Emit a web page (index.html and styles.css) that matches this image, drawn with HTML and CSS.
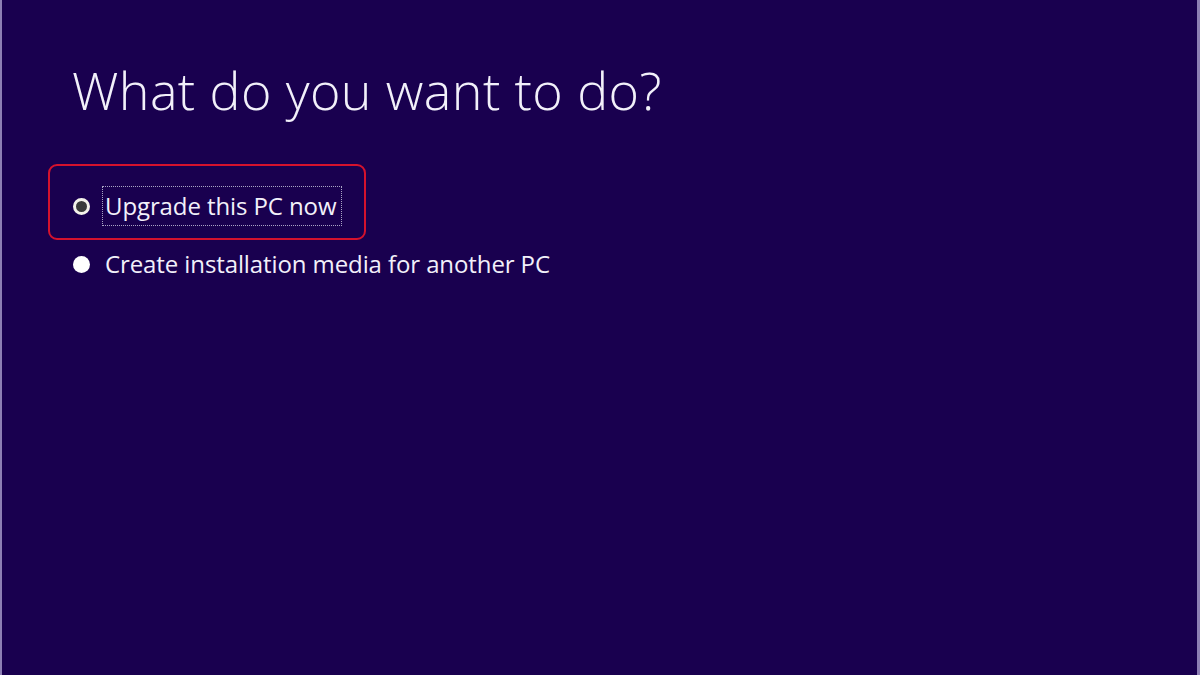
FILE: index.html
```html
<!DOCTYPE html>
<html>
<head>
<meta charset="utf-8">
<link rel="stylesheet" href="styles.css">
</head>
<body>
<div class="screen">
  <h1 class="title">What do you want to do?</h1>
  <div class="options">
    <div class="highlight">
      <label class="option">
        <span class="radio checked"></span>
        <span class="label focus">Upgrade this PC now</span>
      </label>
    </div>
    <label class="option second">
      <span class="radio"></span>
      <span class="label">Create installation media for another PC</span>
    </label>
  </div>
</div>
</body>
</html>
```
FILE: styles.css
```css
html, body {
  margin: 0;
  padding: 0;
  width: 1200px;
  height: 675px;
  overflow: hidden;
  background: #19004f;
}
.screen {
  box-sizing: border-box;
  width: 1200px;
  height: 675px;
  background: #19004f;
  border-left: 2px solid #8d7fb4;
  border-right: 3px solid #8d7fb4;
  padding: 54px 0 0 70px;
  font-family: "Open Sans", "Noto Sans", sans-serif;
  color: #f2f0fa;
}
.title {
  margin: 0;
  font-weight: 300;
  font-size: 52px;
  line-height: 72px;
  letter-spacing: 0.4px;
}
.options {
  margin-top: 38px;
  margin-left: -24px;
  display: flex;
  flex-direction: column;
}
.highlight {
  align-self: flex-start;
  box-sizing: border-box;
  width: 318px;
  height: 76px;
  border: 2px solid #d5122d;
  border-radius: 9px;
  padding: 20px 0 0 23px;
}
.option {
  display: flex;
  align-items: center;
  gap: 12px;
  font-size: 24px;
  letter-spacing: -0.1px;
}
.second {
  margin-top: 4px;
  padding-left: 25px;
}
.radio {
  box-sizing: border-box;
  width: 17px;
  height: 17px;
  border-radius: 50%;
  background: #ffffff;
  flex: none;
}
.radio.checked {
  background: #3a3a3a;
  border: 3px solid #f4f2ea;
}
.label {
  line-height: 38px;
  padding: 0 2px;
  border: 1px solid transparent;
  white-space: nowrap;
}
.label.focus {
  border: 1px dotted #a9a4c4;
  padding-right: 5px;
}
```
